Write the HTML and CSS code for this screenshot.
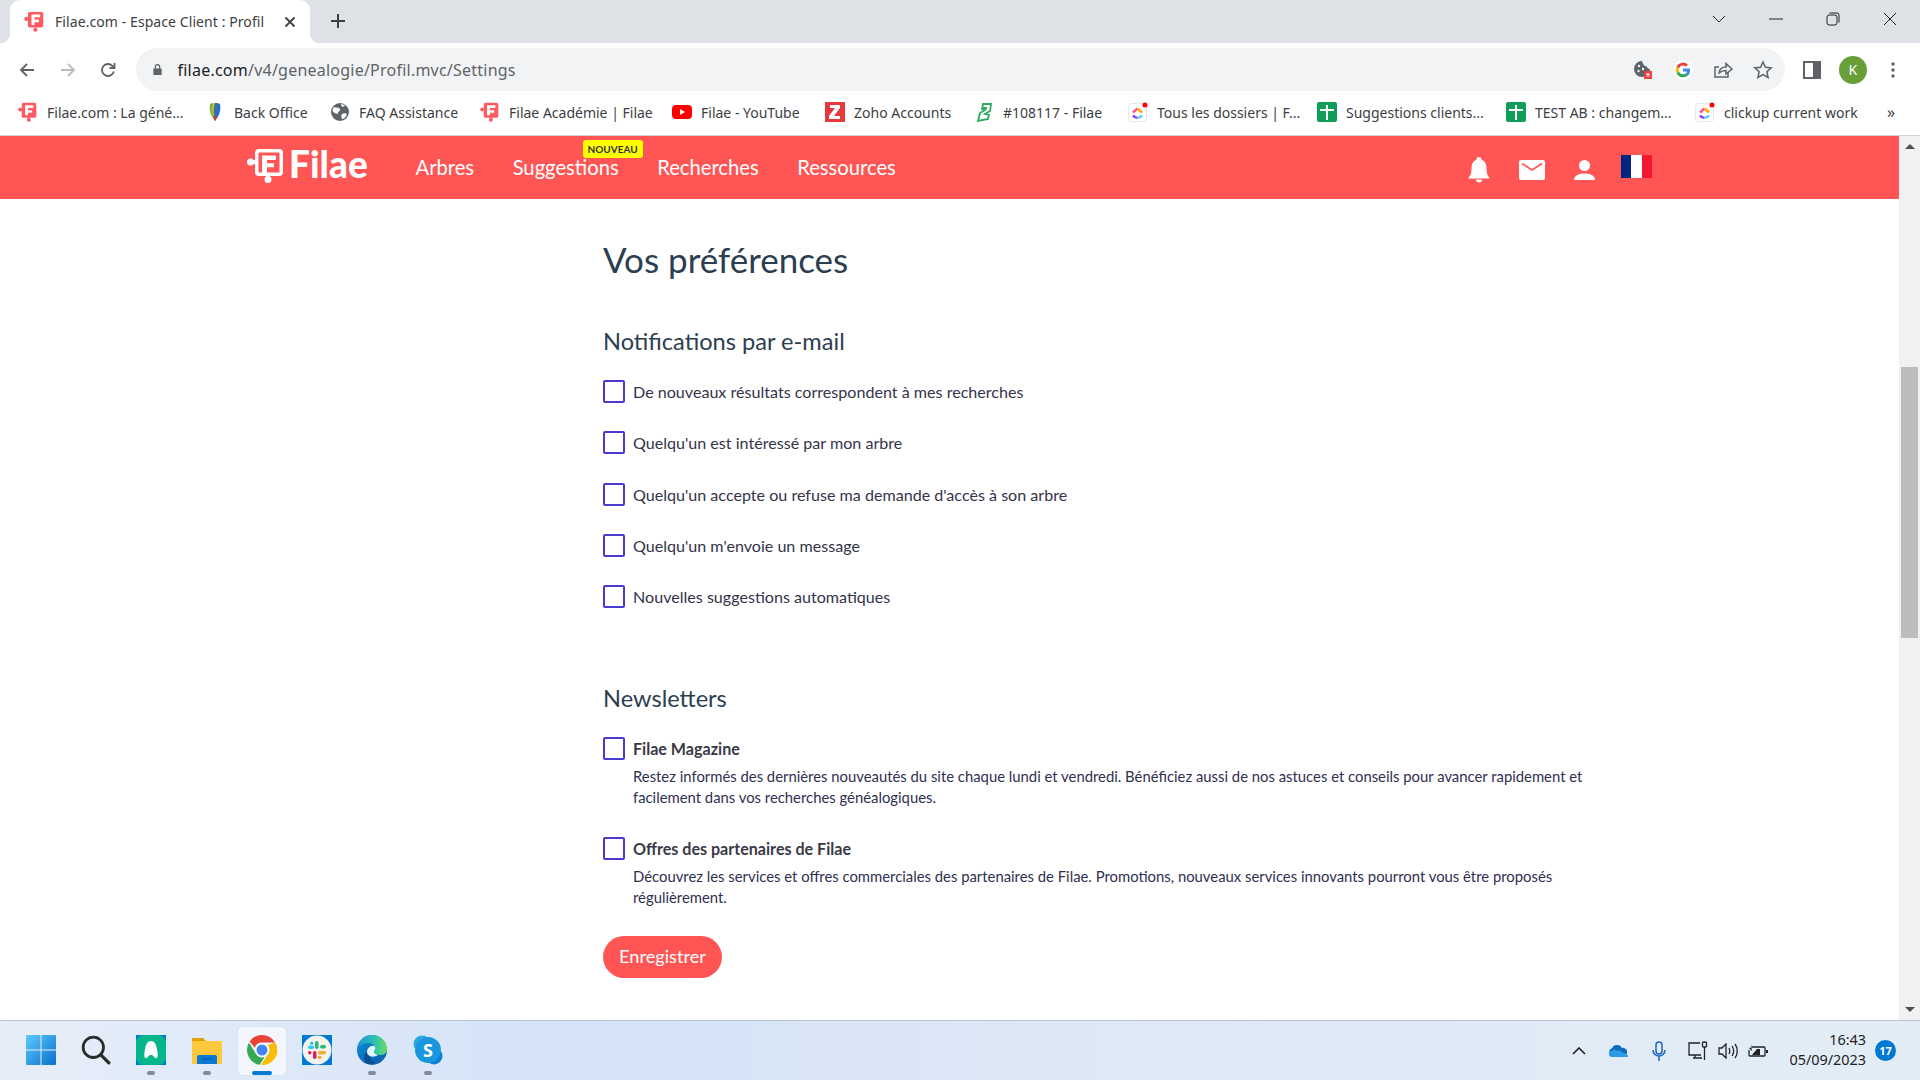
FILE: index.html
```html
<!DOCTYPE html>
<html lang="fr">
<head>
    <meta charset="UTF-8">
    <title>Filae.com - Espace Client : Profil</title>
    <link rel="stylesheet" href="styles.css">
</head>
<body>
    <svg class="defs" width="0" height="0">
        <symbol id="puzzle" viewBox="0 0 24 24">
            <circle cx="2.600" cy="9" r="2.300" fill="currentColor"/>
            <circle cx="13" cy="21.400" r="2.400" fill="currentColor"/>
            <path fill="currentColor" d="M6.500 1h13.200A2.300 2.300 0 0 1 22 3.300v13.400a2.300 2.300 0 0 1-2.300 2.300H6.500a2 2 0 0 1-2-2V3a2 2 0 0 1 2-2z"/>
            <path fill="#fff" d="M8.500 4h10v3.200h-6.500v2.600h5v3h-5V16H8.500z"/>
        </symbol>
        <symbol id="sheet" viewBox="0 0 20 20">
            <rect width="20" height="20" rx="2" fill="#0f9d58"/>
            <path fill="#fff" d="M9 3h2v4h6v2h-6v9H9V9H3V7h6z"/>
        </symbol>
        <symbol id="clickup" viewBox="0 0 20 20">
            <rect x=".5" y="1.500" width="18" height="18" rx="3" fill="#fff" stroke="#e8e8e8"/>
            <path fill="none" stroke="#ff4ea0" stroke-width="2.400" d="M5 10.500l4.500-4"/>
            <path fill="none" stroke="#ffa800" stroke-width="2.400" d="M9.500 6.500l4.500 4"/>
            <path fill="none" stroke="#8930fd" stroke-width="2.400" d="M5 13.500c1.200 1.600 2.800 2.400 4.500 2.400"/>
            <path fill="none" stroke="#49ccf9" stroke-width="2.400" d="M9.500 15.900c1.700 0 3.300-.8 4.500-2.400"/>
            <circle cx="17" cy="3" r="2.500" fill="#f00"/>
        </symbol>
    </svg>

    <div class="browser">
        <div class="tabstrip">
            <div class="tab">
                <svg class="tab-icon"><use href="#puzzle"/></svg>
                <span class="tab-title">Filae.com - Espace Client : Profil</span>
                <svg class="tab-close" viewBox="0 0 12 12"><path d="M1.500 1.500l9 9M10.500 1.500l-9 9"/></svg>
            </div>
            <svg class="new-tab" viewBox="0 0 16 16"><path d="M8 1v14M1 8h14"/></svg>
            <div class="win-controls">
                <span class="win-btn"><svg viewBox="0 0 14 14"><path d="M1 4l6 6 6-6"/></svg></span>
                <span class="win-btn"><svg viewBox="0 0 14 14"><path d="M0 7h14"/></svg></span>
                <span class="win-btn"><svg viewBox="0 0 14 14"><rect x="1" y="3" width="10" height="10" rx="2"/><path d="M3.500 1H11a2 2 0 0 1 2 2v7.500"/></svg></span>
                <span class="win-btn"><svg viewBox="0 0 14 14"><path d="M1 1l12 12M13 1L1 13"/></svg></span>
            </div>
        </div>

        <div class="toolbar">
            <span class="tool-btn"><svg viewBox="0 0 16 16"><path d="M15 8H2M8 2 2 8l6 6"/></svg></span>
            <span class="tool-btn muted"><svg viewBox="0 0 16 16"><path d="M1 8h13M8 2l6 6-6 6"/></svg></span>
            <span class="tool-btn"><svg viewBox="0 0 16 16"><path d="M13.800 9.500A6 6 0 1 1 12.300 3.800L14.500 6M14.500 1v5h-5"/></svg></span>
            <div class="omnibox">
                <svg class="lock" viewBox="0 0 12 14"><path d="M3 6V4a3 3 0 0 1 6 0v2h1.500v7h-9V6zM4.300 6h3.400V4a1.700 1.700 0 0 0-3.400 0z"/></svg>
                <span class="url"><b>filae.com</b>/v4/genealogie/Profil.mvc/Settings</span>
                <div class="omni-icons">
                    <span class="omni-btn">
                        <svg viewBox="0 0 20 20">
                            <path fill="#5f6368" d="M9 1a8 8 0 1 0 8 8c-2 0-3-1-3-2.500C12 6.500 10 5 9 1z"/>
                            <circle cx="6" cy="6" r="1.200" fill="#f1f3f4"/><circle cx="5.500" cy="11" r="1.200" fill="#f1f3f4"/><circle cx="10" cy="9" r="1.200" fill="#f1f3f4"/>
                            <rect x="11" y="11" width="8" height="8" fill="#e5433e"/>
                            <path stroke="#fff" stroke-width="1.200" d="M13.500 13.500l3 3m0-3-3 3"/>
                        </svg>
                    </span>
                    <span class="omni-btn">
                        <svg viewBox="0 0 20 20">
                            <circle cx="10" cy="10" r="10" fill="#fff"/>
                            <path fill="#4285f4" d="M17 10.200c0-.6 0-1.100-.1-1.600H10v3h4a3.400 3.400 0 0 1-1.500 2.200l2.400 1.900C16.300 14.400 17 12.500 17 10.200z"/>
                            <path fill="#34a853" d="M10 17.300c2 0 3.600-.6 4.900-1.800l-2.400-1.900c-.7.500-1.500.7-2.500.7a4.300 4.300 0 0 1-4-3l-2.500 2a7.300 7.300 0 0 0 6.500 4z"/>
                            <path fill="#fbbc05" d="M6 11.300a4.400 4.400 0 0 1 0-2.800l-2.500-2a7.300 7.300 0 0 0 0 6.800z"/>
                            <path fill="#ea4335" d="M10 5.600c1.100 0 2.100.4 2.900 1.100L15 4.600A7.300 7.300 0 0 0 3.500 6.500l2.500 2a4.300 4.300 0 0 1 4-2.900z"/>
                        </svg>
                    </span>
                    <span class="omni-btn">
                        <svg viewBox="0 0 20 20" class="line"><path d="M15 12v5H2V7h4"/><path d="M6 13c.5-4 3.500-6 7-6V3.500L19 9l-6 5v-3.500c-3 0-5 .8-7 2.500z"/></svg>
                    </span>
                    <span class="omni-btn">
                        <svg viewBox="0 0 20 20" class="line"><path d="M10 2l2.400 5.300 5.800.6-4.300 3.900 1.200 5.700L10 14.600l-5.100 2.900 1.200-5.700L1.800 7.900l5.800-.6z"/></svg>
                    </span>
                </div>
            </div>
            <span class="tool-btn"><svg class="panel" viewBox="0 0 18 18"><path d="M0 0h18v18H0zM2 2v14h8V2z" fill-rule="evenodd"/></svg></span>
            <span class="tool-btn"><span class="avatar">K</span></span>
            <span class="tool-btn"><svg class="dots" viewBox="0 0 4 16"><circle cx="2" cy="2" r="1.700"/><circle cx="2" cy="8" r="1.700"/><circle cx="2" cy="14" r="1.700"/></svg></span>
        </div>

        <div class="bookmarks">
            <span class="bm"><svg class="bm-icon pink"><use href="#puzzle"/></svg>Filae.com : La géné...</span>
            <span class="bm">
                <svg class="bm-icon" viewBox="0 0 20 20">
                    <path fill="#7cb342" d="M10 1C7 1 5.500 1.500 5 2c-1 5 0 11 5 17z"/>
                    <path fill="#f2b92a" d="M10 1C8 5 8 9 9 15l1 4c-3-6-3.500-12-2-18z"/>
                    <path fill="#2e6fb7" d="M10 1c2 0 4 .4 5 1 1 5 0 11-5 17-1.500-6-1.500-12 0-18z"/>
                    <path fill="#d93a32" d="M7.500 14c1.500 1 3.500 1 5 0L10 19z"/>
                </svg>Back Office</span>
            <span class="bm">
                <svg class="bm-icon" viewBox="0 0 20 20">
                    <circle cx="10" cy="10" r="9" fill="#5f6368"/>
                    <path fill="#fff" d="M4 5c2 1 5 0 6 2s-2 2-2 4-3 0-5-1c-1-2 0-4 1-5zM12 12c2-1 4-1 5 0-1 3-3 5-5 5-1-2-1-4 0-5zM11 2c2 0 3 1 4 2l-3 1z"/>
                </svg>FAQ Assistance</span>
            <span class="bm"><svg class="bm-icon pink"><use href="#puzzle"/></svg>Filae Académie | Filae</span>
            <span class="bm">
                <svg class="bm-icon" viewBox="0 0 20 20">
                    <rect y="3" width="20" height="14" rx="4" fill="#f00"/>
                    <path fill="#fff" d="M8 7l5 3-5 3z"/>
                </svg>Filae - YouTube</span>
            <span class="bm">
                <svg class="bm-icon" viewBox="0 0 20 20">
                    <rect width="20" height="20" fill="#e8383d"/>
                    <path fill="#fff" d="M5 3h10v3l-6 8h6v3H4v-3l6-8H5z"/>
                </svg>Zoho Accounts</span>
            <span class="bm">
                <svg class="bm-icon" viewBox="0 0 20 20">
                    <path fill="none" stroke="#2faa5f" stroke-width="1.800" d="M9 2h8l-1 7-5 3 4 1-1 4-10 2 2-8 5-3-3-1zM8 6h5"/>
                </svg>#108117 - Filae</span>
            <span class="bm"><svg class="bm-icon"><use href="#clickup"/></svg>Tous les dossiers | F...</span>
            <span class="bm"><svg class="bm-icon"><use href="#sheet"/></svg>Suggestions clients...</span>
            <span class="bm"><svg class="bm-icon"><use href="#sheet"/></svg>TEST AB : changem...</span>
            <span class="bm"><svg class="bm-icon"><use href="#clickup"/></svg>clickup current work</span>
            <span class="bm-more">»</span>
        </div>
    </div>

    <div class="viewport">
        <div class="page">
            <header class="site-header">
                <div class="site-header-inner">
                    <a class="logo">
                        <svg class="logo-mark" viewBox="0 0 36 34">
                            <circle cx="3.500" cy="13" r="3.500" fill="#fff"/>
                            <circle cx="21" cy="30.500" r="3.500" fill="#fff"/>
                            <path fill="#fff" d="M5 11h5v4H5zM19 24h4v5h-4z"/>
                            <path fill="#fff" fill-rule="evenodd" d="M12 0h20a4 4 0 0 1 4 4v19a4 4 0 0 1-4 4H12a4 4 0 0 1-4-4V4a4 4 0 0 1 4-4zm0 3.500a.5.500 0 0 0-.5.500v19a.5.500 0 0 0 .5.500h20a.5.500 0 0 0 .5-.5V4a.5.500 0 0 0-.5-.5z"/>
                            <path fill="#fff" d="M15 6.500h14v4.500h-9v3.200h7v4h-7V27h-5z"/>
                        </svg>
                        <span class="logo-text">Filae</span>
                    </a>
                    <nav class="main-nav">
                        <a>Arbres</a>
                        <a class="has-badge">Suggestions<span class="badge">NOUVEAU</span></a>
                        <a>Recherches</a>
                        <a>Ressources</a>
                    </nav>
                    <div class="header-icons">
                        <svg class="ico-bell" viewBox="0 0 22 26"><path fill="#fff" d="M11 0a2.500 2.500 0 0 1 2.500 2.800C17 4 18.500 7 18.500 11c0 5 .8 7.500 3.500 10.500H0C2.700 18.500 3.500 16 3.500 11c0-4 1.500-7 5-8.200A2.500 2.500 0 0 1 11 0zM8 22.500h6a3 3 0 0 1-6 0z"/></svg>
                        <svg class="ico-mail" viewBox="0 0 26 20"><rect width="26" height="20" rx="2" fill="#fff"/><path fill="none" stroke="#ff5555" stroke-width="1.600" d="M3 3.500l10 6.500 10-6.500"/></svg>
                        <svg class="ico-user" viewBox="0 0 21 20"><circle cx="10.500" cy="5.500" r="5.500" fill="#fff"/><path fill="#fff" d="M0 20c0-4 4-6.500 10.500-6.500S21 16 21 20z"/></svg>
                        <span class="flag"><i></i><i></i><i></i></span>
                    </div>
                </div>
            </header>

            <main class="content">
                <h1>Vos préférences</h1>

                <h2>Notifications par e-mail</h2>
                <div class="check-list">
                    <label class="check-row"><span class="box"></span>De nouveaux résultats correspondent à mes recherches</label>
                    <label class="check-row"><span class="box"></span>Quelqu'un est intéressé par mon arbre</label>
                    <label class="check-row"><span class="box"></span>Quelqu'un accepte ou refuse ma demande d'accès à son arbre</label>
                    <label class="check-row"><span class="box"></span>Quelqu'un m'envoie un message</label>
                    <label class="check-row"><span class="box"></span>Nouvelles suggestions automatiques</label>
                </div>

                <h2 class="second">Newsletters</h2>
                <div class="news-item">
                    <label class="check-row"><span class="box"></span><strong>Filae Magazine</strong></label>
                    <p>Restez informés des dernières nouveautés du site chaque lundi et vendredi. Bénéficiez aussi de nos astuces et conseils pour avancer rapidement et facilement dans vos recherches généalogiques.</p>
                </div>
                <div class="news-item">
                    <label class="check-row"><span class="box"></span><strong>Offres des partenaires de Filae</strong></label>
                    <p>Découvrez les services et offres commerciales des partenaires de Filae. Promotions, nouveaux services innovants pourront vous être proposés régulièrement.</p>
                </div>

                <button class="save-btn">Enregistrer</button>
            </main>
        </div>

        <div class="scrollbar">
            <span class="arrow up"></span>
            <div class="track"><div class="thumb"></div></div>
            <span class="arrow down"></span>
        </div>
    </div>

    <footer class="taskbar">
        <div class="task-apps">
            <span class="app">
                <svg viewBox="0 0 29 29">
                    <defs><linearGradient id="win" x1="0" y1="0" x2="1" y2="1"><stop offset="0" stop-color="#5ccbfa"/><stop offset="1" stop-color="#0a6fd0"/></linearGradient></defs>
                    <path fill="url(#win)" d="M1 0h13v14H0V1a1 1 0 0 1 1-1zM15 0h13a1 1 0 0 1 1 1v13H15zM0 15h14v14H1a1 1 0 0 1-1-1zM15 15h14v13a1 1 0 0 1-1 1H15z"/>
                </svg>
            </span>
            <span class="app">
                <svg viewBox="0 0 28 28"><circle cx="11.500" cy="11.500" r="9.500" fill="none" stroke="#2b2b2b" stroke-width="2.600"/><path stroke="#2b2b2b" stroke-width="3" stroke-linecap="round" d="M18.500 18.500l7.500 7.500"/></svg>
            </span>
            <span class="app open">
                <svg viewBox="0 0 30 30"><rect width="30" height="30" fill="#0078d4"/><rect width="30" height="30" rx="8" fill="#07b58a"/><path fill="#fff" d="M15 6c3.500 0 5 3 6 8 .6 3 1 6 .5 8-.4 1.500-2.500 1.500-3.500 0-.8-1.500-1.500-2-3-2s-2.200.5-3 2c-1 1.500-3.100 1.500-3.500 0-.5-2-.1-5 .5-8 1-5 2.500-8 6-8z"/></svg>
            </span>
            <span class="app open">
                <svg viewBox="0 0 30 30"><path fill="#e0a000" d="M1 3h10l3 3h15v4H0V4a1 1 0 0 1 1-1z"/><path fill="#ffc83d" d="M0 6h29a1 1 0 0 1 1 1v21a1 1 0 0 1-1 1H1a1 1 0 0 1-1-1z"/><path fill="#0a78d4" d="M5 29v-7a2 2 0 0 1 2-2h16a2 2 0 0 1 2 2v7z"/><path stroke="#0a4f96" d="M10 24h10"/></svg>
            </span>
            <span class="app active">
                <svg viewBox="0 0 30 30">
                    <path fill="#ea4335" d="M15 0a15 15 0 0 1 13 7.500H15a7.500 7.500 0 0 0-7.200 5.300L2.600 6.500A15 15 0 0 1 15 0z"/>
                    <path fill="#34a853" d="M2 7.500 9 19a7.500 7.500 0 0 0 8.500 3.100L12.800 29.800A15 15 0 0 1 2 7.500z"/>
                    <path fill="#fbbc05" d="M28.200 7.500A15 15 0 0 1 14 30l7.500-11.500A7.500 7.500 0 0 0 20.500 10z"/>
                    <circle cx="15" cy="15" r="7" fill="#fff"/><circle cx="15" cy="15" r="5.500" fill="#4285f4"/>
                </svg>
            </span>
            <span class="app">
                <svg viewBox="0 0 30 30">
                    <rect width="30" height="30" fill="#0078d4"/><circle cx="15" cy="15" r="14.500" fill="#f4f4ef"/>
                    <rect x="13" y="6" width="3.500" height="8" rx="1.700" fill="#2eb67d"/><rect x="18" y="10" width="6" height="3.500" rx="1.700" fill="#2eb67d"/>
                    <rect x="6" y="10.500" width="6" height="3.500" rx="1.700" fill="#36c5f0"/><rect x="8" y="6.500" width="3.500" height="3.500" rx="1.700" fill="#36c5f0"/>
                    <rect x="6" y="16" width="3.500" height="3.500" rx="1.700" fill="#e01e5a"/><rect x="11" y="16" width="3.500" height="8" rx="1.700" fill="#e01e5a"/>
                    <rect x="16" y="16" width="8" height="3.500" rx="1.700" fill="#ecb22e"/><rect x="16" y="20.500" width="3.500" height="3.500" rx="1.700" fill="#ecb22e"/>
                </svg>
            </span>
            <span class="app open">
                <svg viewBox="0 0 30 30">
                    <defs><linearGradient id="edge" x1="0" y1="0" x2="1" y2="1"><stop offset="0" stop-color="#0c8ed9"/><stop offset="1" stop-color="#0a5aa8"/></linearGradient><linearGradient id="edge2" x1="0" y1="0" x2="1" y2="0"><stop offset="0" stop-color="#1595d8"/><stop offset=".6" stop-color="#2cc3b0"/><stop offset="1" stop-color="#6fdc5e"/></linearGradient></defs>
                    <circle cx="15" cy="15" r="15" fill="url(#edge)"/>
                    <path fill="#0b4e92" d="M11 16c0 5 3 10 8 11-3 2-7 3-10 1-3-3-3-9 2-12z"/>
                    <path fill="#dff4fb" d="M10 17c0-4 4-7 8-6 2 1 1 3 0 4-1 2 0 4 3 5-3 2-6 2-8 1-2-1-3-2-3-4z"/>
                    <path fill="url(#edge2)" d="M0 14C1 6 8 0 15 0c9 0 15 7 15 14 0 4-3 6-7 6-3 0-6-1-6-3 0-2 2-2 1-5-1-3-4-4-7-4-5 0-9 3-11 6z"/>
                </svg>
            </span>
            <span class="app open">
                <svg viewBox="0 0 30 30">
                    <circle cx="9" cy="9" r="8.500" fill="#2aa9e6"/><circle cx="21" cy="21" r="8.500" fill="#0a80d0"/><circle cx="15" cy="15" r="13" fill="#1a96dc"/>
                    <text x="15" y="21.500" class="skype-s">S</text>
                </svg>
            </span>
        </div>
        <div class="tray">
            <svg class="tray-caret" viewBox="0 0 14 8"><path d="M1 7l6-6 6 6"/></svg>
            <svg class="tray-cloud" viewBox="0 0 20 12"><path fill="#0f6cbd" d="M5 11a4 4 0 0 1-1-7.800A5.500 5.500 0 0 1 14 3a4 4 0 0 1 2 8z"/><path fill="#2b9be8" d="M4 12a3 3 0 0 1 0-6c2-2 4-1 5 0 3-1 5 0 6 2 3 0 5 1 5 4z"/></svg>
            <svg class="tray-mic" viewBox="0 0 14 20"><rect x="4" y="1" width="6" height="12" rx="3"/><path d="M1 9a6 6 0 0 0 12 0M7 15v5"/></svg>
            <svg class="tray-line net" viewBox="0 0 20 20"><path d="M12 2H1v12h12M5 17h9M7 14v3"/><rect x="14.500" y="1" width="4" height="5" rx="1"/><path d="M16.500 6v13"/></svg>
            <svg class="tray-line vol" viewBox="0 0 20 16"><path d="M1 5h3l4-4v14l-4-4H1zM11 5c1 2 1 4 0 6M14 3c2 3 2 7 0 10M17 1c3 4 3 10 0 14"/></svg>
            <svg class="tray-line bat" viewBox="0 0 20 14"><path d="M4 3h12a1 1 0 0 1 1 1v7a1 1 0 0 1-1 1H2a1 1 0 0 1-1-1V6"/><path fill="#222" stroke="none" d="M4 11l5-6h3v6zM18 6h2v3h-2zM3 0l1 3-3 1 3 3"/></svg>
            <div class="clock"><span>16:43</span><span>05/09/2023</span></div>
            <span class="notif">17</span>
        </div>
    </footer>
</body>
</html>
```
FILE: styles.css
```css
* {
    box-sizing: border-box;
}

html, body {
    margin: 0;
    height: 100%;
}

body {
    width: 1920px;
    height: 1080px;
    overflow: hidden;
    display: flex;
    flex-direction: column;
    background: #fff;
    font-family: "Lato", sans-serif;
}

.defs {
    display: none;
}

/* browser chrome */
.browser {
    flex: none;
    font-family: "Noto Sans", "Open Sans", sans-serif;
    color: #3c4043;
    border-bottom: 1px solid #d0d2d5;
}

.tabstrip {
    height: 43px;
    display: flex;
    align-items: center;
    background: #dee1e6;
}

.tab {
    position: relative;
    width: 300px;
    height: 43px;
    margin-left: 10px;
    padding-left: 14px;
    display: flex;
    align-items: center;
    background: #fff;
    border-radius: 10px 10px 0 0;
}

.tab::before,
.tab::after {
    content: "";
    position: absolute;
    bottom: 0;
    width: 10px;
    height: 10px;
}

.tab::before {
    left: -10px;
    background: radial-gradient(circle at 0 0, #dee1e6 10px, #fff 10.5px);
}

.tab::after {
    right: -10px;
    background: radial-gradient(circle at 100% 0, #dee1e6 10px, #fff 10.5px);
}

.tab-icon {
    width: 21px;
    height: 21px;
    margin-top: -1px;
    color: #ff5a60;
}

.tab-title {
    margin: -1px 0 0 10px;
    font-size: 14px;
    letter-spacing: .08px;
    white-space: nowrap;
}

.tab-close {
    position: absolute;
    left: 274px;
    top: 16px;
    width: 12px;
    height: 12px;
    fill: none;
    stroke: #3c4043;
    stroke-width: 1.8;
}

.new-tab {
    width: 16px;
    height: 16px;
    margin: -2px 0 0 20px;
    fill: none;
    stroke: #3c4043;
    stroke-width: 2;
}

.win-controls {
    align-self: flex-start;
    margin-left: auto;
    padding-right: 2px;
    display: flex;
}

.win-btn {
    width: 57px;
    height: 37px;
    display: flex;
    align-items: center;
    justify-content: center;
}

.win-btn svg {
    width: 14px;
    height: 14px;
    fill: none;
    stroke: #222;
    stroke-width: 1;
}

.toolbar {
    height: 48px;
    padding: 5px 0 0 7px;
    display: flex;
    background: #fff;
}

.tool-btn {
    width: 40.5px;
    height: 43px;
    display: flex;
    align-items: center;
    justify-content: center;
}

.tool-btn svg {
    width: 16px;
    height: 16px;
    fill: none;
    stroke: #5f6368;
    stroke-width: 1.8;
}

.tool-btn.muted svg {
    stroke: #b9bbbe;
}

.tool-btn .panel {
    width: 18px;
    height: 18px;
    fill: #5f6368;
    stroke: none;
}

.tool-btn .dots {
    width: 4px;
    height: 16px;
    fill: #5f6368;
    stroke: none;
}

.avatar {
    width: 28px;
    height: 28px;
    margin-left: 1px;
    border-radius: 50%;
    display: flex;
    align-items: center;
    justify-content: center;
    background: #689f38;
    color: #fff;
    font-size: 14px;
}

.omnibox {
    width: 1649px;
    height: 43px;
    margin: 0 7px;
    padding: 0 2px 0 16px;
    display: flex;
    align-items: center;
    background: #f1f3f4;
    border-radius: 22px;
}

.lock {
    width: 11px;
    height: 13px;
    fill: #5f6368;
    fill-rule: evenodd;
}

.url {
    margin-left: 15px;
    font-size: 16px;
    letter-spacing: .23px;
    color: #5f6368;
}

.url b {
    font-weight: 400;
    color: #202124;
}

.omni-icons {
    margin-left: auto;
    display: flex;
}

.omni-btn {
    width: 40px;
    display: flex;
    justify-content: center;
}

.omni-btn svg {
    width: 20px;
    height: 20px;
}

.omni-btn .line {
    fill: none;
    stroke: #5f6368;
    stroke-width: 1.5;
}

.bookmarks {
    height: 44px;
    padding: 0 0 2px 18px;
    display: grid;
    grid-template-columns: 187px 125px 150px 192px 153px 149px 154px 189px 189px 189px 192px 20px;
    align-items: center;
    background: #fff;
    font-size: 14px;
}

.bm {
    display: flex;
    align-items: center;
    gap: 9px;
    white-space: nowrap;
}

.bm-icon {
    flex: none;
    width: 20px;
    height: 20px;
}

.bm-icon.pink {
    color: #ff5a60;
}

.bm-more {
    font-size: 16px;
}

/* page */
.viewport {
    flex: 1;
    min-height: 0;
    display: flex;
}

.page {
    flex: 1;
    min-width: 0;
    overflow: hidden;
}

.site-header {
    height: 63px;
    background: #ff5555;
}

.site-header-inner {
    width: 1405px;
    height: 100%;
    margin: 0 auto;
    display: flex;
    align-items: center;
}

.logo {
    flex: none;
    width: 121px;
    margin-top: -3px;
    display: flex;
    align-items: flex-start;
    gap: 6px;
}

.logo-mark {
    flex: none;
    width: 36px;
    height: 34px;
}

.logo-text {
    font-size: 37px;
    font-weight: 900;
    line-height: 30px;
    color: #fff;
}

.main-nav {
    margin: -2px 0 0 47.5px;
    display: flex;
    gap: 38.5px;
}

.main-nav a {
    position: relative;
    font-size: 20.2px;
    color: #fff;
}

.badge {
    position: absolute;
    left: 70px;
    top: -15px;
    width: 60px;
    height: 18px;
    display: flex;
    align-items: center;
    justify-content: center;
    background: #ffff00;
    border-radius: 3px;
    font-size: 10px;
    font-weight: 700;
    color: #333;
}

.header-icons {
    margin-left: auto;
    display: flex;
    align-items: center;
}

.ico-bell {
    width: 22px;
    height: 26px;
    margin-top: 4px;
}

.ico-mail {
    width: 26px;
    height: 20px;
    margin: 5px 0 0 29px;
}

.ico-user {
    width: 21px;
    height: 20px;
    margin: 5px 0 0 29px;
}

.flag {
    width: 31px;
    height: 23px;
    margin: -3px 0 0 26px;
    display: flex;
}

.flag i {
    flex: 1;
}

.flag i:nth-child(1) { background: #00267f; }
.flag i:nth-child(2) { background: #fff; }
.flag i:nth-child(3) { background: #f31830; }

.content {
    padding: 40px 0 0 603px;
    color: #34344a;
}

h1 {
    margin: 0 0 47px;
    font-size: 35px;
    line-height: 40px;
    font-weight: 400;
    color: #2c3e50;
}

h2 {
    margin: 0 0 24px;
    font-size: 23.6px;
    line-height: 30px;
    font-weight: 400;
    color: #2c3e50;
}

h2.second {
    margin-top: 75px;
}

.check-list {
    display: flex;
    flex-direction: column;
    gap: 28.3px;
}

.check-row {
    height: 23px;
    display: flex;
    align-items: center;
    gap: 8px;
    font-size: 16.1px;
}

.box {
    flex: none;
    width: 22px;
    height: 23px;
    background: #fff;
    border: 2px solid #4b3ad0;
    border-radius: 2px;
}

.check-row strong {
    font-weight: 700;
    color: #3a3a46;
}

.news-item {
    margin-bottom: 28.5px;
}

.news-item p {
    width: 965px;
    margin: 6px 0 0 30px;
    font-size: 14.85px;
    line-height: 21px;
    color: #2f3050;
}

.save-btn {
    width: 119px;
    height: 42px;
    padding: 0 0 2px;
    border: none;
    border-radius: 21px;
    background: #ff5555;
    color: #fff;
    font-family: "Lato", sans-serif;
    font-size: 18.2px;
}

.scrollbar {
    flex: none;
    width: 21px;
    display: flex;
    flex-direction: column;
    background: #f1f1f1;
}

.arrow {
    flex: none;
    height: 21px;
    display: flex;
    align-items: center;
    justify-content: center;
}

.arrow::after {
    content: "";
    border-left: 5px solid transparent;
    border-right: 5px solid transparent;
}

.arrow.up::after { border-bottom: 5px solid #505050; }
.arrow.down::after { border-top: 5px solid #505050; }

.track {
    flex: 1;
    padding-top: 210px;
}

.thumb {
    height: 271px;
    margin: 0 2px;
    background: #bcbcbc;
}

/* windows taskbar */
.taskbar {
    flex: none;
    height: 60px;
    padding-left: 13px;
    display: flex;
    align-items: center;
    justify-content: space-between;
    border-top: 1px solid #b9c4d2;
    background: linear-gradient(90deg, #e6eef8 0%, #d5e3f8 30%, #dfe9f6 60%, #e2edf7 100%);
}

.task-apps {
    display: flex;
}

.app {
    position: relative;
    width: 55.3px;
    height: 48px;
    display: flex;
    align-items: center;
    justify-content: center;
}

.app svg {
    width: 30px;
    height: 30px;
    margin-top: -2px;
}

.app.open::after,
.app.active::after {
    content: "";
    position: absolute;
    bottom: 0;
    left: 50%;
    width: 8px;
    height: 4px;
    margin-left: -4px;
    border-radius: 2px;
    background: #858b94;
}

.app.active {
    width: 48px;
    margin: 0 3.65px;
    background: #f3f7fd;
    border-radius: 4px;
    box-shadow: 0 0 1px rgba(0,0,0,0.25);
}

.app.active::after {
    width: 20px;
    margin-left: -10px;
    background: #0078d4;
}

.skype-s {
    font-family: "Open Sans", sans-serif;
    font-size: 18px;
    font-weight: 700;
    fill: #fff;
    text-anchor: middle;
}

.tray {
    display: flex;
    align-items: center;
    padding-right: 24px;
}

.tray svg {
    flex: none;
}

.tray-caret {
    width: 14px;
    height: 8px;
    fill: none;
    stroke: #222;
    stroke-width: 1.6;
}

.tray-cloud {
    width: 20px;
    height: 12px;
    margin-left: 22px;
}

.tray-mic {
    width: 14px;
    height: 20px;
    margin-left: 23.5px;
    fill: none;
    stroke: #1a66c2;
    stroke-width: 1.5;
}

.tray-line {
    fill: none;
    stroke: #222;
    stroke-width: 1.3;
}

.net {
    width: 20px;
    height: 20px;
    margin-left: 22.5px;
}

.vol {
    width: 20px;
    height: 16px;
    margin-left: 10px;
}

.bat {
    width: 20px;
    height: 14px;
    margin-left: 10px;
}

.clock {
    width: 90px;
    margin: -2px 0 0 8px;
    display: flex;
    flex-direction: column;
    align-items: flex-end;
    font-family: "Noto Sans", "Open Sans", sans-serif;
    font-size: 14.4px;
    line-height: 20px;
    color: #222;
}

.notif {
    width: 21px;
    height: 21px;
    margin-left: 9px;
    border-radius: 50%;
    display: flex;
    align-items: center;
    justify-content: center;
    background: #0078d4;
    color: #fff;
    font-family: "Noto Sans", sans-serif;
    font-size: 11px;
    font-weight: 700;
}
```
